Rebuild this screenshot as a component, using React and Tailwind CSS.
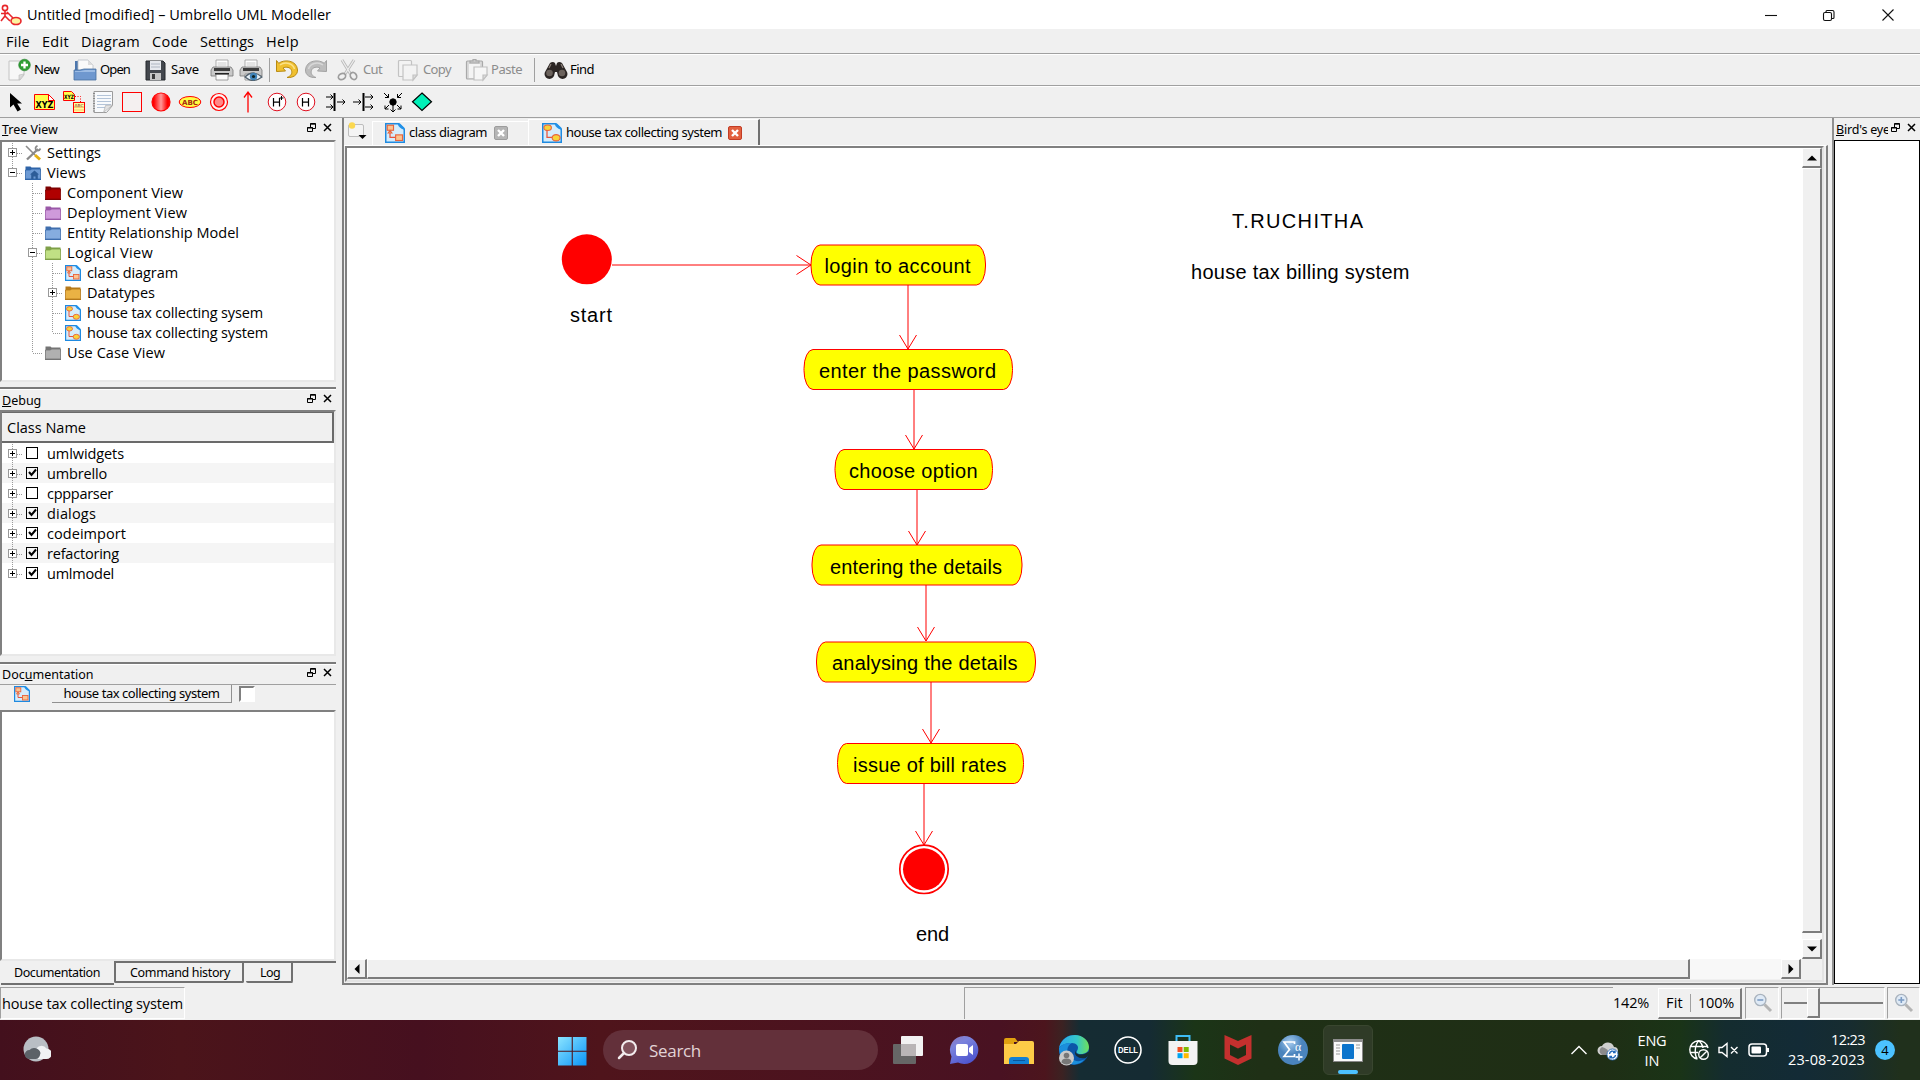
import React, { useLayoutEffect, useRef, useState } from "react";

const SEGOE = "font-['Open_Sans','Noto_Sans',sans-serif]";
const TAHOMA = "font-['Noto_Sans','Open_Sans',sans-serif]";

/* A single line of text whose tracking is adjusted so that it fills `w` pixels. */
function Fit({ w, children, className = "" }) {
  const ref = useRef(null);
  const [spacing, setSpacing] = useState(0);
  const text = String(children);
  useLayoutEffect(() => {
    const natural = ref.current.getBoundingClientRect().width - spacing * text.length;
    setSpacing((w - natural) / text.length);
  }, [w, text]);
  return (
    <span className={`block shrink-0 whitespace-pre ${className}`} style={{ width: w }}>
      <span ref={ref} style={{ letterSpacing: spacing }}>{children}</span>
    </span>
  );
}

/* ---------- small drawings ---------- */

const Logo = () => (
  <svg width="22" height="22" viewBox="0 0 22 22" fill="none" stroke="#e8262a" strokeWidth="1.6">
    <circle cx="5" cy="4" r="2.6" />
    <path d="M5 7v5M1 9.500h7M5 12l-4 5M5 12l5 5M7 8l6 6" />
    <ellipse cx="16" cy="17" rx="5" ry="3.500" fill="#fdf3a0" />
  </svg>
);

const NewDoc = () => (
  <svg width="24" height="24" viewBox="0 0 24 24">
    <path d="M2 3h15v14l-4 5H2z" fill="#f7f7f7" stroke="#c4c4c4" />
    <path d="M17 16l-5 6v-5z" fill="#dcdcdc" stroke="#bbb" strokeWidth=".6" />
    <circle cx="17.500" cy="7" r="5.800" fill="#2f9e35" stroke="#1b7a22" strokeWidth=".6" />
    <path d="M17.500 3.500v7M14 7h7" stroke="#fff" strokeWidth="2.300" />
  </svg>
);
const OpenDoc = () => (
  <svg width="24" height="24" viewBox="0 0 24 24">
    <path d="M2 3h5l2 3v8H2z" fill="#4d77ad" />
    <path d="M5 2h10l5 5v10H5z" fill="#fafafa" stroke="#b9bec5" strokeWidth=".8" />
    <path d="M15 2v5h5z" fill="#ddd" />
    <path d="M1 22V12h6l4-1h12v11z" fill="#6f98cf" stroke="#47709f" strokeWidth=".8" />
    <path d="M2 13h6l4-1h10v2H2z" fill="#9dbce4" />
  </svg>
);
const SaveIcon = () => (
  <svg width="22" height="24" viewBox="0 0 22 24">
    <path d="M1 3h17l2 2v17H1z" fill="#43474d" stroke="#25282c" />
    <path d="M5 3h11v9H5z" fill="#e6e9ee" />
    <path d="M6 6h9M6 9h9" stroke="#aeb6c2" />
    <path d="M5 15h11v7H5z" fill="#c6c6c6" />
    <path d="M7 16h3v5H7z" fill="#3a3a3a" />
  </svg>
);
const Printer = ({ eye }) => (
  <svg width="24" height="24" viewBox="0 0 24 24">
    <path d="M6 2h12v8H6z" fill="#fff" stroke="#999" strokeWidth=".8" />
    <path d="M7.500 5h9M7.500 7h9" stroke="#bbb" strokeWidth=".8" />
    <path d="M3 9h18l2 3v6H1v-6z" fill="#c9c9c9" stroke="#777" strokeWidth=".8" />
    <path d="M4 10h16v3H4z" fill="#3c3c3c" />
    <path d="M6 16h12v6H6z" fill="#fafafa" stroke="#888" strokeWidth=".8" />
    {!eye && <path d="M5 15h14v1.500H5z" fill="#222" />}
    {eye && (
      <g>
        <path d="M6 19q8-8 17 0q-9 7-17 0z" fill="#e8f1f8" stroke="#54636f" strokeWidth="1.200" />
        <circle cx="14.500" cy="18.500" r="3.700" fill="#3f83b8" />
        <circle cx="14.500" cy="18.500" r="1.600" fill="#122" />
      </g>
    )}
  </svg>
);
const Undo = ({ gray, flip }) => (
  <svg width="24" height="24" viewBox="0 0 24 24" className={flip ? "-scale-x-100" : ""}>
    <path
      d="M1.500 2.500l2.200 2.800C9 1 22 2 22.500 12c.2 5-4.500 8-10.500 7.500 4-1.500 5.500-4 4.500-7C15.500 9 11 8.500 8 10l2.500 3-9 .5z"
      fill={gray ? "#bdbdbd" : "#f0c030"}
      stroke={gray ? "#a3a3a3" : "#b88a10"}
      strokeWidth="1"
    />
    <path d="M5 7c5-3.500 13-2 14.500 4" fill="none" stroke={gray ? "#d8d8d8" : "#fbe28a"} strokeWidth="1.500" />
  </svg>
);
const Scissors = () => (
  <svg width="22" height="24" viewBox="0 0 22 24" fill="none">
    <path d="M5 2l8.500 14M17 2L8 16" stroke="#b9b9b9" strokeWidth="3" />
    <path d="M5 2l8.500 14M17 2L8 16" stroke="#ededed" strokeWidth="1.300" />
    <ellipse cx="5" cy="18.500" rx="3.800" ry="3" stroke="#9d9d9d" strokeWidth="1.700" transform="rotate(-30 5 18.500)" />
    <ellipse cx="16.500" cy="18" rx="3" ry="3.700" stroke="#9d9d9d" strokeWidth="1.700" transform="rotate(-30 16.500 18)" />
  </svg>
);
const CopyIcon = () => (
  <svg width="22" height="24" viewBox="0 0 22 24" fill="#f3f3f3" stroke="#c3c3c3" strokeWidth="1.200">
    <rect x="1.500" y="2.500" width="13" height="16" rx="1" />
    <path d="M6 7h14v10l-4 5H6z" />
    <path d="M20 17h-4v5z" fill="#ddd" />
  </svg>
);
const PasteIcon = () => (
  <svg width="24" height="24" viewBox="0 0 24 24" stroke="#a9a9a9" strokeWidth="1.200">
    <rect x="1.500" y="3" width="16" height="18" rx="1" fill="#dadada" />
    <rect x="4" y="6" width="11" height="14" fill="#f4f4f4" stroke="none" />
    <path d="M5 5V3h3V1.500h3V3h3v2z" fill="#c8c8c8" />
    <path d="M9 9h13v8l-4 5H9z" fill="#f6f6f6" stroke="#c0c0c0" />
    <path d="M22 17h-4v5z" fill="#ddd" stroke="#c0c0c0" />
  </svg>
);
const Binoculars = () => (
  <svg width="24" height="20" viewBox="0 0 24 20">
    <path d="M6 3q3-2 5 0l1 3 1-3q2-2 5 0l5 9a4.500 4.500 0 0 1-9 4l-1-4h-2l-1 4a4.500 4.500 0 0 1-9-4z" fill="#2b2523" />
    <circle cx="5.500" cy="13" r="3.300" fill="#6b625c" />
    <circle cx="18" cy="13" r="3.300" fill="#6b625c" />
    <path d="M7 4l-2 4M17 4l2 4" stroke="#8b8079" strokeWidth="1.200" />
  </svg>
);

const CursorIcon = () => (
  <svg width="24" height="24" viewBox="0 0 24 24">
    <path d="M6 3v14.500l3.500-3 4 7 3.500-2-3.800-6H18z" fill="#000" />
  </svg>
);
const XyzIcon = () => (
  <svg width="24" height="24" viewBox="0 0 24 24">
    <path d="M1.500 4.500h14l6 6v9h-20z" fill="#ffff4d" stroke="#f00" />
    <path d="M15.500 4.500l6 6h-6z" fill="#fff" stroke="#f00" />
    <text x="2.500" y="18" textLength="18" lengthAdjust="spacingAndGlyphs" fontSize="9.500" fontWeight="700" fontFamily="DejaVu Sans">XYZ</text>
  </svg>
);
const XyzNote = () => (
  <svg width="24" height="24" viewBox="0 0 24 24">
    <path d="M1.500 1.500h8l3 3v6h-11z" fill="#ffff4d" stroke="#f00" />
    <text x="2" y="9.300" textLength="10" lengthAdjust="spacingAndGlyphs" fontSize="6" fontWeight="700" fontFamily="DejaVu Sans">XYZ</text>
    <path d="M13 6.500h5.500V12" fill="none" stroke="#f00" strokeDasharray="1 1.500" />
    <rect x="11.500" y="12.500" width="11" height="10" fill="#ffffa0" stroke="#f00" />
    <path d="M12 17.500h10M12 20h10" stroke="#fa5" strokeWidth=".7" />
    <text x="12.500" y="16.600" textLength="9" lengthAdjust="spacingAndGlyphs" fontSize="4" fontFamily="DejaVu Sans" fill="#822">ABC</text>
  </svg>
);
const NoteIcon = () => (
  <svg width="24" height="24" viewBox="0 0 24 24">
    <path d="M3 1.500h18.500v14l-6 7H3z" fill="#f8fafc" stroke="#9c9c9c" />
    <path d="M6 5.500h14M6 8.500h14M6 11.500h14M6 14.500h14M6 17.500h9" stroke="#b4c4d8" />
    <path d="M3 3v19" stroke="#888" strokeDasharray="1 1.500" strokeWidth="2" />
    <path d="M21.500 15l-9 7.500 2-7z" fill="#e2e2e2" stroke="#aaa" strokeWidth=".6" />
  </svg>
);
const RectIcon = () => (
  <svg width="24" height="24" viewBox="0 0 24 24"><rect x="2.500" y="2.500" width="19" height="19" fill="#f4f0f0" stroke="#f00" /></svg>
);
const BallIcon = () => (
  <svg width="24" height="24" viewBox="0 0 24 24">
    <defs>
      <linearGradient id="ball"><stop offset=".1" stopColor="#f00" /><stop offset=".5" stopColor="#f99" /><stop offset=".85" stopColor="#f00" /></linearGradient>
    </defs>
    <circle cx="12" cy="12" r="9" fill="url(#ball)" stroke="#f00" strokeWidth="1.200" />
  </svg>
);
const AbcIcon = () => (
  <svg width="24" height="24" viewBox="0 0 24 24">
    <ellipse cx="12" cy="12" rx="10.800" ry="5.500" fill="#ff4" stroke="#f00" />
    <text x="4" y="14.800" textLength="16" lengthAdjust="spacingAndGlyphs" fontSize="7" fontWeight="700" fill="#a52a10" fontFamily="DejaVu Sans">ABC</text>
  </svg>
);
const TargetIcon = () => (
  <svg width="24" height="24" viewBox="0 0 24 24" stroke="#f00">
    <circle cx="12" cy="12" r="8.500" fill="#fdf4f4" strokeWidth="1.200" />
    <circle cx="12" cy="12" r="5" fill="#f88" strokeWidth="1.500" />
  </svg>
);
const UpArrow = () => (
  <svg width="24" height="24" viewBox="0 0 24 24" stroke="#f00" strokeWidth="1.300" fill="none"><path d="M12 22.500V2M8 7.500L12 2l4 5.500" /></svg>
);
const HIcon = ({ star }) => (
  <svg width="24" height="24" viewBox="0 0 24 24">
    <circle cx="12" cy="12" r="8.800" fill="#fff" stroke="#e01020" />
    <path d="M8.500 8v8.500M14.500 8v8.500M8.500 12.200h6" stroke="#000" strokeWidth="1.200" />
    {star && <path d="M16.500 6v4M14.500 8h4" stroke="#000" />}
  </svg>
);
const ForkIcon = ({ flip }) => (
  <svg width="24" height="24" viewBox="0 0 24 24" stroke="#000" fill="none">
    {flip ? (
      <path d="M1 12h8M6.500 9.500L9 12l-2.500 2.500M13 7h8M18.500 4.500L21 7l-2.500 2.500M13 17h8M18.500 14.500L21 17l-2.500 2.500" />
    ) : (
      <path d="M3 7h7M7.500 4.500L10 7 7.500 9.500M3 17h7M7.500 14.500L10 17l-2.500 2.500M14 12h8M19.500 9.500L22 12l-2.500 2.500" />
    )}
    <path d="M11.500 3v18" strokeWidth="2" />
  </svg>
);
const MergeIcon = () => (
  <svg width="24" height="24" viewBox="0 0 24 24" stroke="#000" fill="none">
    <path d="M3 3l4.500 4.500M7.500 4v3.500H4M21 3l-4.500 4.500M16.500 4v3.500H20M12 15v7M9.500 19.500L12 22l2.500-2.500M8 15l-4 4M4 15.500V19h3.500M16 15l4 4M20 15.500V19h-3.500" />
    <circle cx="12" cy="12" r="3.200" fill="#000" />
  </svg>
);
const DiamondIcon = () => (
  <svg width="24" height="24" viewBox="0 0 24 24"><path d="M12 3l9.500 8.700L12 20.500 2.500 11.700z" fill="#00f0b8" stroke="#000" strokeWidth="1.200" /></svg>
);

const DiagramIcon = ({ size = 16, activity }) => (
  <svg width={size} height={size} viewBox="0 0 16 16">
    <path d="M.6.6h10.400L15.400 5v10.400H.6z" fill="#d5ecfb" stroke="#1f8ae0" strokeWidth="1.200" />
    <path d="M10 .3q1 4 5.700 5V4L12 .3z" fill="#2191e8" />
    <path d="M4 5v6.500h6" fill="none" stroke="#e8543c" />
    {activity ? (
      <g fill="#f7d33a" stroke="#e8643c" strokeWidth=".9">
        <ellipse cx="4.500" cy="3.800" rx="3" ry="2.200" />
        <ellipse cx="11.300" cy="11.800" rx="3.200" ry="2.500" />
      </g>
    ) : (
      <g fill="#fbc490" stroke="#e8643c" strokeWidth=".9">
        <rect x="1.800" y="1.800" width="5" height="4" />
        <rect x="8.500" y="9.500" width="5.500" height="4.500" />
        <path d="M4 6l-1.500 2H5.500z" />
      </g>
    )}
  </svg>
);
const Folder = ({ dark, light, home }) => (
  <svg width="16" height="16" viewBox="0 0 16 16">
    <path d="M.5 1.500h5l1 1h9v4H.5z" fill={dark} />
    <path d="M.5 5h5l1-1h9v10H.5z" fill={light} stroke={dark} strokeWidth=".8" />
    <path d="M0 14.500h16" stroke={dark} />
    {home && <path d="M5 9.500L9.500 5.500 14 9.500h-1.200V14H10.500v-2.500h-2V14H6.200V9.500z" fill="#2c5c98" />}
  </svg>
);
const Tools = () => (
  <svg width="17" height="16" viewBox="0 0 17 16" fill="none">
    <path d="M1 1l9 9" stroke="#8b8b8b" strokeWidth="1.600" />
    <path d="M10 10l5 4.500" stroke="#e3b012" strokeWidth="3" />
    <path d="M13 4L2 14.500" stroke="#8a8a8a" strokeWidth="2.400" />
    <path d="M12.500.8q-3 1.500-1.500 4.200 3 1.500 4.500-1.500" stroke="#8a8a8a" strokeWidth="1.700" />
  </svg>
);

/* ---------- window chrome ---------- */

function TitleBar() {
  return (
    <div className={`flex h-[29px] items-center bg-white ${SEGOE} text-[14.5px] text-black`}>
      <div className="flex w-[27px]"><Logo /></div>
      <Fit w={304}>Untitled [modified] – Umbrello UML Modeller</Fit>
      <div className="ml-auto flex items-center">
        <svg width="156" height="28" viewBox="0 0 156 28" fill="none" stroke="#111" strokeWidth="1.100">
          <path d="M1 14.500h12" />
          <rect x="59.500" y="11.500" width="8" height="8" rx="1.500" />
          <path d="M62 11.500V10.500a1 1 0 0 1 1-1h5.500a1.500 1.500 0 0 1 1.500 1.500v5.500a1 1 0 0 1-1 1h-1.500" />
          <path d="M118.500 8.500l11 11M129.500 8.500l-11 11" />
        </svg>
      </div>
    </div>
  );
}

const MENUS = [["File", 24], ["Edit", 27], ["Diagram", 59], ["Code", 36], ["Settings", 54], ["Help", 33]];
function MenuBar() {
  return (
    <div className={`flex h-[24px] items-center gap-3 pt-[2px] pl-1.5 ${SEGOE} text-[14.5px] text-black`}>
      {MENUS.map(([t, w]) => <Fit key={t} w={w}>{t}</Fit>)}
    </div>
  );
}

const Sep = ({ className = "" }) => <div className={`h-[24px] w-px shrink-0 bg-[#a0a0a0] ${className}`} />;

function Toolbar() {
  return (
    <div className={`flex h-[32px] items-center border-t border-[#a0a0a0] pt-px pl-[7px] shadow-[inset_0_1px_0_#fff] ${TAHOMA} text-[13px] text-black`}>
      <div className="w-[27px]"><NewDoc /></div><Fit w={25}>New</Fit>
      <div className="ml-[14px] w-[27px]"><OpenDoc /></div><Fit w={30}>Open</Fit>
      <div className="ml-[15px] w-[26px]"><SaveIcon /></div><Fit w={28}>Save</Fit>
      <div className="ml-[11px] w-[29px]"><Printer /></div>
      <div className="w-[30px]"><Printer eye /></div>
      <Sep />
      <div className="ml-[5px] w-[29px]"><Undo /></div>
      <div className="w-[33px]"><Undo gray flip /></div>
      <div className="w-[26px]"><Scissors /></div><Fit w={19} className="text-[#8c8c8c]">Cut</Fit>
      <div className="ml-[15px] w-[26px]"><CopyIcon /></div><Fit w={28} className="text-[#8c8c8c]">Copy</Fit>
      <div className="ml-[14px] w-[26px]"><PasteIcon /></div><Fit w={31} className="text-[#8c8c8c]">Paste</Fit>
      <Sep className="ml-[12px]" />
      <div className="ml-[9px] w-[26px]"><Binoculars /></div><Fit w={24}>Find</Fit>
    </div>
  );
}

const TOOLS = [
  CursorIcon, XyzIcon, XyzNote, NoteIcon, RectIcon, BallIcon, AbcIcon, TargetIcon, UpArrow,
  () => <HIcon star />, HIcon, ForkIcon, () => <ForkIcon flip />, MergeIcon, DiamondIcon,
];
function DrawBar() {
  return (
    <div className="flex h-[32px] items-center gap-[5px] border-t border-[#a0a0a0] pl-[4px] pt-px shadow-[inset_0_1px_0_#fff]">
      {TOOLS.map((Icon, i) => <Icon key={i} />)}
    </div>
  );
}

/* ---------- dock panels ---------- */

const DockButtons = ({ className }) => (
  <svg className={`mb-[4px] shrink-0 ${className}`} width="26" height="11" viewBox="0 0 26 11" fill="none" stroke="#000">
    <path d="M3.500 4V.5h5v5H6M3 1.200h6" />
    <path d="M.5 4.500h5v4h-5zM0 5h6" />
    <path d="M17 1l7 7M24 1l-7 7" strokeWidth="1.500" />
  </svg>
);

function DockTitle({ children, className = "h-[21px]" }) {
  return (
    <div className={`flex shrink-0 items-center pt-[2px] ${TAHOMA} text-[12.5px] text-black ${className}`}>
      <span className="pl-[2px]">{children}</span>
      <DockButtons className="mr-[3px] ml-auto" />
    </div>
  );
}

const frame =
  "border-2 border-t-[#808080] border-l-[#808080] border-b-[#e8e8e8] border-r-[#e8e8e8] bg-white";

/* Branch lines and the expander box left of a tree row. */
function Branch({ level, box, up = true, down = true, rails = [] }) {
  const x = 10.5 + level * 20;
  const w = 23 + level * 20;
  return (
    <svg width={w} height="20" viewBox={`0 0 ${w} 20`} className="shrink-0" fill="none" stroke="#999" shapeRendering="crispEdges">
      <g strokeDasharray="1 1">
        {rails.map((r) => <path key={r} d={`M${10.5 + r * 20} 0v20`} />)}
        {up && <path d={`M${x} 0v10`} />}
        {down && <path d={`M${x} 10v10`} />}
        <path d={`M${x} 10.500h10`} />
      </g>
      {box && (
        <g>
          <rect x={x - 4} y="5.500" width="8" height="8" fill="#fff" />
          <path d={`M${x - 2.5} 9.500h5`} stroke="#000" />
          {box === "+" && <path d={`M${x} 7v5`} stroke="#000" />}
        </g>
      )}
    </svg>
  );
}

const TREE = [
  { t: "Settings", w: 54, icon: <Tools />, level: 0, box: "+" },
  { t: "Views", w: 39, icon: <Folder dark="#2f64a8" light="#6d9ad4" home />, level: 0, box: "-", down: false },
  { t: "Component View", w: 116, icon: <Folder dark="#7d0000" light="#b00000" />, level: 1 },
  { t: "Deployment View", w: 120, icon: <Folder dark="#9a58a8" light="#cf9adb" />, level: 1 },
  { t: "Entity Relationship Model", w: 172, icon: <Folder dark="#3f6ead" light="#86addf" />, level: 1 },
  { t: "Logical View", w: 86, icon: <Folder dark="#7fa048" light="#c0e084" />, level: 1, box: "-" },
  { t: "class diagram", w: 91, icon: <DiagramIcon />, level: 2, rails: [1] },
  { t: "Datatypes", w: 68, icon: <Folder dark="#b5791a" light="#eab244" />, level: 2, box: "+", rails: [1] },
  { t: "house tax collecting sysem", w: 176, icon: <DiagramIcon activity />, level: 2, rails: [1] },
  { t: "house tax collecting system", w: 181, icon: <DiagramIcon activity />, level: 2, rails: [1], down: false },
  { t: "Use Case View", w: 98, icon: <Folder dark="#747474" light="#b0b0b0" />, level: 1, down: false },
];

const DEBUG = [
  ["umlwidgets", 77, false], ["umbrello", 60, true], ["cppparser", 66, false], ["dialogs", 49, true],
  ["codeimport", 79, true], ["refactoring", 72, true], ["umlmodel", 67, true],
];

function LeftDocks() {
  return (
    <div className="flex w-[336px] shrink-0 flex-col">
      <DockTitle className="mt-px h-[21px]"><u>T</u>ree View</DockTitle>
      <div className={`h-[242px] w-[336px] ${frame} pt-[1px] ${SEGOE} text-[14.5px] text-black`}>
        {TREE.map((r) => (
          <div key={r.t + r.w} className="flex h-5 items-center">
            <Branch level={r.level} box={r.box} down={r.down} rails={r.rails} />
            <div className="w-[22px] shrink-0">{r.icon}</div>
            <Fit w={r.w}>{r.t}</Fit>
          </div>
        ))}
      </div>

      <div className="mt-[5px] h-[2px] bg-[#7a7a7a]" />
      <DockTitle className="h-[21px] border-t border-white"><u>D</u>ebug</DockTitle>
      <div className={`h-[246px] w-[336px] ${frame} ${SEGOE} text-[14.5px] text-black`}>
        <div className="flex h-[31px] items-center border-t border-r-2 border-b-2 border-[#6a6a6a] bg-[#f0f0f0] pt-[2px] pl-[5px]">
          <Fit w={79}>Class Name</Fit>
        </div>
        {DEBUG.map(([t, w, on], i) => (
          <div key={t} className="flex h-5 items-center pt-px odd:bg-[#f5f5f5]">
            <Branch level={0} box="+" down={i < DEBUG.length - 1} />
            <svg width="22" height="20" viewBox="0 0 22 20" className="shrink-0" fill="none">
              <rect x="1.500" y="3.500" width="11" height="11" stroke="#000" />
              {on && <path d="M4 8l2.500 3L11 5.500" stroke="#000" strokeWidth="2" />}
            </svg>
            <Fit w={w}>{t}</Fit>
          </div>
        ))}
      </div>

      <div className="mt-[6px] h-[2px] bg-[#7a7a7a]" />
      <DockTitle className="h-[20px] border-t border-white">Doc<u>u</u>mentation</DockTitle>
      <div className={`flex h-[26px] items-start border-t border-[#a0a0a0] ${TAHOMA} text-[13px] text-black`}>
        <div className="ml-[14px] mt-[1px] w-[38px]"><DiagramIcon /></div>
        <div className="flex h-[18px] w-[180px] items-center justify-center border-r border-b border-[#909090]">
          <Fit w={156}>house tax collecting system</Fit>
        </div>
        <div className="ml-[7px] mt-[1px] h-[16px] w-[16px] border-2 border-t-[#808080] border-l-[#808080] border-b-[#fff] border-r-[#fff] bg-white" />
      </div>
      <div className={`h-[251px] w-[336px] ${frame}`} />
      <div className={`flex h-[24px] items-start ${TAHOMA} text-[12.5px] text-black`}>
        <div className="ml-[1px] flex h-[24px] w-[113px] items-center border-b-2 border-[#707070] pl-[13px] pt-[2px]">
          <Fit w={86}>Documentation</Fit>
        </div>
        <div className="flex flex-1 items-start border-t-2 border-[#707070]">
          <div className="flex h-[20px] w-[130px] items-center rounded-b-xs border-r-2 border-b-2 border-l-2 border-[#707070] pt-[2px] pl-[14px]">
            <Fit w={100}>Command history</Fit>
          </div>
          <div className="ml-[2px] flex h-[20px] w-[47px] items-center rounded-b-xs border-r-2 border-b-2 border-[#707070] pt-[2px] pl-[14px]">
            <Fit w={20}>Log</Fit>
          </div>
        </div>
      </div>
    </div>
  );
}

/* ---------- diagram ---------- */

const NODES = [
  { x: 811, y: 245, w: 174.5, t: "login to account", tx: 824.5, ty: 272.500, tw: 146 },
  { x: 804, y: 349.5, w: 208.5, t: "enter the password", tx: 819, ty: 378, tw: 177 },
  { x: 835, y: 449.5, w: 157.500, t: "choose option", tx: 849, ty: 478, tw: 128.500 },
  { x: 812, y: 545, w: 210, t: "entering the details", tx: 830, ty: 573.500, tw: 172 },
  { x: 816.5, y: 642, w: 219, t: "analysing the details", tx: 832, ty: 669.800, tw: 185.500 },
  { x: 837.5, y: 743.5, w: 186, t: "issue of bill rates", tx: 853, ty: 772, tw: 153.500 },
];
const LINKS = [[908, 285, 349], [914, 390, 449], [917, 490, 545], [926, 585, 641], [931, 682, 743], [924, 784, 845]];
const LABELS = [
  ["start", 570, 322, 42], ["end", 916, 940.5, 33],
  ["T.RUCHITHA", 1232, 227.5, 131], ["house tax billing system", 1191, 279, 218.500],
];

function Canvas() {
  return (
    <svg width="1455" height="811" viewBox="347 148 1455 811" className="block bg-white" fontFamily="Liberation Sans, Arial, sans-serif" fontSize="20">
      <circle cx="586.800" cy="259.300" r="25" fill="#f00" />
      <g stroke="#f00" fill="none">
        <path d="M612 265H811M796.500 255.500L811 265l-14.500 9.500" />
        {LINKS.map(([x, a, b]) => (
          <path key={b} d={`M${x} ${a}V${b}M${x - 8.5} ${b - 14}L${x} ${b}l8.500-14`} />
        ))}
      </g>
      {NODES.map((n) => (
        <g key={n.t}>
          <rect x={n.x} y={n.y} width={n.w} height="40" rx="9" ry="19" fill="#ff0" stroke="#f00" />
          <text x={n.tx} y={n.ty} textLength={n.tw}>{n.t}</text>
        </g>
      ))}
      <circle cx="924" cy="869.300" r="24.200" fill="#fff" stroke="#f00" strokeWidth="1.700" />
      <circle cx="924" cy="869.300" r="21" fill="#f00" />
      {LABELS.map(([t, x, y, w]) => <text key={t} x={x} y={y} textLength={w}>{t}</text>)}
    </svg>
  );
}

const raised = "border-t border-l border-t-white border-l-white border-r-2 border-b-2 border-r-[#7c7c7c] border-b-[#7c7c7c] bg-[#f0f0f0]";
const track = "bg-[#f8f8f8]";

const ScrollArrow = ({ d }) => (
  <div className={`flex h-[20px] w-[20px] shrink-0 items-center justify-center ${raised}`}>
    <svg width="10" height="10" viewBox="0 0 10 10"><path d={d} fill="#000" /></svg>
  </div>
);

const TabClose = ({ on }) => (
  <svg width="14" height="14" viewBox="0 0 14 14" className="shrink-0">
    <rect x=".5" y=".5" width="13" height="13" rx="1.500" fill={on ? "#e2603f" : "#b5b5b5"} stroke={on ? "#c23c24" : "#9d9d9d"} />
    <path d="M4 4l6 6M10 4l-6 6" stroke="#fff" strokeWidth="2.400" />
  </svg>
);

function Center() {
  return (
    <div className="ml-[6px] flex h-[867px] w-[1486px] shrink-0 flex-col border-l-2 border-[#808080]">
      <div className={`flex h-[27px] shrink-0 items-end ${TAHOMA} text-[13px] text-black`}>
        <svg className="mb-[4px] ml-[4px]" width="20" height="20" viewBox="0 0 20 20">
          <rect x=".5" y="3.500" width="15" height="12" rx="1.500" fill="#f4f4f4" stroke="#bdbdbd" />
          <circle cx="4" cy="4.500" r="3.200" fill="#fbd850" />
          <path d="M10.500 14h8l-4 4z" fill="#000" />
        </svg>
        <div className="ml-[4px] flex h-[24px] w-[156px] items-center border-t border-l border-white pb-[1px] pl-[12px]">
          <DiagramIcon size={20} />
          <Fit w={78} className="ml-[4px]">class diagram</Fit>
          <div className="ml-[7px]"><TabClose /></div>
        </div>
        <div className="flex h-[26px] w-[232px] items-center border-t border-r-2 border-l border-t-white border-l-white border-r-[#707070] pl-[13px]">
          <DiagramIcon size={20} activity />
          <Fit w={156} className="ml-[4px]">house tax collecting system</Fit>
          <div className="ml-[6px]"><TabClose on /></div>
        </div>
      </div>
      <div className="flex-1 border-t border-r-2 border-b-2 border-t-white border-r-[#808080] border-b-[#808080] pl-px">
        <div className="h-[836px] w-[1479px] border-2 border-t-[#808080] border-l-[#808080] border-r-[#e3e3e3] border-b-[#e3e3e3] bg-[#f0f0f0]">
          <div className="flex">
            <Canvas />
            <div className={`flex h-[811px] w-[20px] flex-col ${track}`}>
              <ScrollArrow d="M5 2.500l5 5H0z" />
              <div className={`h-[765px] w-[20px] ${raised}`} />
              <div className="h-[6px]" />
              <ScrollArrow d="M5 7.500l-5-5h10z" />
            </div>
          </div>
          <div className={`flex h-[20px] w-[1454px] ${track}`}>
            <ScrollArrow d="M2.500 5l5-5v10z" />
            <div className={`h-[20px] w-[1323px] ${raised}`} />
            <div className="flex-1" />
            <ScrollArrow d="M7.500 5l-5 5V0z" />
          </div>
        </div>
      </div>
    </div>
  );
}

function BirdsEye() {
  return (
    <div className="ml-[4px] flex h-[867px] flex-1 flex-col border-l-2 border-[#909090]">
      <div className={`flex h-[22px] items-center pt-[2px] ${TAHOMA} text-[12.5px] text-black`}>
        <span className="w-[54px] overflow-hidden pl-[2px] tracking-[-0.2px] whitespace-nowrap"><u>B</u>ird's eye</span>
        <DockButtons className="ml-[3px]" />
      </div>
      <div className="h-[844px] border border-black bg-white" />
    </div>
  );
}

/* ---------- status bar ---------- */

const Magnifier = ({ plus }) => (
  <svg width="20" height="20" viewBox="0 0 20 20" fill="none">
    <path d="M11.500 11.500l6.500 6.500" stroke="#b4b4b4" strokeWidth="3" />
    <circle cx="7.300" cy="7" r="5.600" fill="#dfeaf6" stroke="#a9b3be" strokeWidth="1.400" />
    <path d="M4.300 7h6" stroke="#7c9cc4" strokeWidth="1.600" />
    {plus && <path d="M7.300 4v6" stroke="#7c9cc4" strokeWidth="1.600" />}
  </svg>
);
const sunken = "border-t border-l border-[#a0a0a0] border-r border-b border-r-white border-b-white";

function StatusBar() {
  return (
    <div className={`flex h-[35px] items-center pt-px ${SEGOE} text-[14.5px] text-black`}>
      <div className={`flex h-[32px] w-[185px] items-center pt-px pl-px ${sunken}`}>
        <Fit w={181}>house tax collecting system</Fit>
      </div>
      <div className="ml-[779px] h-[32px] w-[649px] shrink-0 border-t border-l border-[#a0a0a0]" />
      <Fit w={36}>142%</Fit>
      <div className={`ml-[9px] flex h-[31px] w-[84px] items-center pt-px pl-[7px] ${raised}`}>
        <Fit w={17}>Fit</Fit>
        <div className="mx-[7px] h-[18px] w-px bg-[#a0a0a0]" />
        <Fit w={36}>100%</Fit>
      </div>
      <div className={`ml-[3px] flex h-[32px] w-[34px] items-center justify-center pl-px ${sunken}`}><Magnifier /></div>
      <div className={`ml-[2px] flex h-[32px] w-[104px] items-center pl-[2px] ${sunken}`}>
        <div className="h-[2px] w-[23px] bg-[#808080]" />
        <div className={`h-[30px] w-[13px] ${raised}`} />
        <div className="h-[2px] w-[63px] bg-[#808080]" />
      </div>
      <div className={`ml-[2px] flex h-[32px] flex-1 items-center justify-center pl-px ${sunken}`}><Magnifier plus /></div>
    </div>
  );
}

/* ---------- taskbar ---------- */

function Taskbar() {
  return (
    <div className={`flex h-[60px] items-center bg-[linear-gradient(90deg,#43101d_0px,#4b141a_180px,#46101f_420px,#4f141b_600px,#491222_1000px,#4c151d_1045px,#3c2222_1062px,#152c33_1080px,#152b33_1150px,#1b3517_1195px,#1f3016_1260px,#1f2e15_1600px,#1a3417_1680px,#142c2f_1725px,#132b36_1800px,#172c30_1850px,#20301c_1900px)] ${SEGOE} text-white`}>
      <svg width="30" height="30" viewBox="0 0 30 30" className="ml-[21px] shrink-0">
        <circle cx="15" cy="14" r="12.500" fill="#b9bec4" />
        <path d="M14 24a5 5 0 0 1 1-9.500 6 6 0 0 1 10.500-1 5 5 0 0 1 0 10.500z" fill="#f0f2f4" />
        <path d="M8 24a4.500 4.500 0 0 1 .5-9 6.500 6.500 0 0 1 11 3q-1 6-5 6z" fill="#5c6268" />
      </svg>
      <svg width="30" height="30" viewBox="0 0 30 30" className="mt-px ml-[506px] shrink-0">
        <defs><linearGradient id="win" x1="0" y1="0" x2="1" y2="1"><stop stopColor="#8be4ff" /><stop offset="1" stopColor="#0a94f8" /></linearGradient></defs>
        <path d="M1 1h13.700v13.700H1zM15.800 1h13.700v13.700H15.800zM1 15.800h13.700v13.700H1zM15.800 15.800h13.700v13.700H15.800z" fill="url(#win)" />
      </svg>
      <div className="ml-[16px] flex h-[40px] w-[275px] shrink-0 items-center rounded-full bg-[#63303a] pl-[14px]">
        <svg width="22" height="22" viewBox="0 0 22 22" fill="none" stroke="#f3ecee" strokeWidth="2" strokeLinecap="round">
          <circle cx="12" cy="9" r="7" fill="#81525c" /><path d="M7 14l-5 5" strokeWidth="2.500" />
        </svg>
        <Fit w={52} className="mt-[2px] ml-[10px] text-[17px] text-[#e2d3d6]">Search</Fit>
      </div>
      <svg width="32" height="30" viewBox="0 0 32 30" className="ml-[14px] shrink-0">
        <rect x="1" y="9" width="23" height="20" rx="1" fill="#666" />
        <rect x="9" y="1" width="22" height="20" rx="1" fill="#f2f2f2" />
        <path d="M9 9h15v12H9z" fill="#b9b5b6" />
      </svg>
      <svg width="30" height="30" viewBox="0 0 30 30" className="ml-[25px] shrink-0">
        <defs><linearGradient id="chat" x1="0" y1="0" x2=".6" y2="1"><stop stopColor="#8d76b8" /><stop offset=".35" stopColor="#7b83dd" /><stop offset="1" stopColor="#4e55cf" /></linearGradient></defs>
        <path d="M15 1a14 14 0 1 1-6 26.500L1 29l1.500-7.500A14 14 0 0 1 15 1z" fill="url(#chat)" />
        <rect x="7" y="9" width="12" height="12" rx="2" fill="#fff" /><path d="M20 13l4-3v10l-4-3z" fill="#fff" />
      </svg>
      <svg width="30" height="30" viewBox="0 0 30 30" className="mt-px ml-[25px] shrink-0">
        <path d="M0 4q0-2 2-2h9l3 4h-4v6H0z" fill="#e0a10f" />
        <path d="M0 8h12l3-3h13q2 0 2 2v21H0z" fill="#fdcb47" />
        <path d="M5 28v-4q0-3 3-3h14q3 0 3 3v4z" fill="#1280d4" /><path d="M9 24.500h12" stroke="#0a569c" />
      </svg>
      <svg width="32" height="32" viewBox="0 0 32 32" className="ml-[24px] shrink-0">
        <defs>
          <linearGradient id="edgeA" x1="0" x2="1"><stop stopColor="#2aa6ee" /><stop offset=".6" stopColor="#35c7c9" /><stop offset="1" stopColor="#6fe05a" /></linearGradient>
        </defs>
        <circle cx="16" cy="16" r="15" fill="#0c56a8" />
        <path d="M1 14C3 5 10 1 17 1c8 0 14 6 14 12 0 5-4 7-8 7s-5-2-4-3c3-5-1-8-5-8C8 9 3 11 1 14z" fill="url(#edgeA)" />
        <path d="M1 14c3-4 8-5.500 13-5-5 2-7 10-1 15 4 4 9 4 14 1-5 7-16 7-22 1C2 22 1 18 1 14z" fill="#1b8fdc" />
        <path d="M18.500 15.500q-2 3 1 4.500 6 2 12-3v4l-4 3q-6 1-9-2t0-6.500z" fill="#152c33" />
        <circle cx="8.500" cy="24" r="7.500" fill="#c9c9c9" />
        <circle cx="8.500" cy="21.500" r="2.800" fill="#777" /><path d="M3.500 28.500q0-4 5-4t5 4q-5 4-10 0z" fill="#777" />
      </svg>
      <svg width="30" height="30" viewBox="0 0 30 30" className="ml-[23px] shrink-0">
        <circle cx="15" cy="15" r="13" fill="none" stroke="#fff" strokeWidth="1.600" />
        <text x="5" y="18.300" textLength="20" lengthAdjust="spacingAndGlyphs" fontSize="9.500" fontWeight="700" fill="#fff" fontFamily="Liberation Sans">DELL</text>
      </svg>
      <svg width="30" height="32" viewBox="0 0 30 32" className="ml-[25px] shrink-0">
        <path d="M8.500 7V2h13v5" fill="none" stroke="#3ebcf5" strokeWidth="2" />
        <path d="M.5 7h29v20q0 4-4 4h-21q-4 0-4-4z" fill="#f3f3f3" />
        <path d="M9.500 13h5v5h-5z" fill="#f25022" /><path d="M15.700 13h5v5h-5z" fill="#7fba00" />
        <path d="M9.500 19.200h5v5h-5z" fill="#00a4ef" /><path d="M15.700 19.200h5v5h-5z" fill="#ffb900" />
      </svg>
      <svg width="28" height="30" viewBox="0 0 28 30" className="ml-[26px] shrink-0">
        <path d="M.5 0L14 6 27.500 0v23.500L14 30 .5 23.500z" fill="#c4302e" /><path d="M6 9.500l8 4 8-4v10.500l-8 4-8-4z" fill="#1f2e16" />
      </svg>
      <svg width="32" height="32" viewBox="0 0 32 32" className="ml-[25px] shrink-0">
        <defs><radialGradient id="sig" cx=".4" cy=".25"><stop stopColor="#a5cbee" /><stop offset=".8" stopColor="#4a84bd" /></radialGradient></defs>
        <circle cx="16" cy="16" r="15" fill="url(#sig)" />
        <path d="M17.500 10V8H7l5.500 7.500L7 22.500h10.500v-2.500" fill="none" stroke="#fff" strokeWidth="1.700" />
        <text x="18" y="17" fontSize="12" fill="#fff" fontFamily="Liberation Serif">α</text>
        <path d="M22 19.500v7M18.500 23h7" stroke="#dce9f5" strokeWidth="1.800" />
      </svg>
      <div className="ml-[14px] flex h-[50px] w-[50px] shrink-0 flex-col items-center rounded-md border border-[#39462f] bg-[#2f3b27] pt-[13px]">
        <svg width="30" height="23" viewBox="0 0 30 23" className="shrink-0">
          <rect x=".5" y=".5" width="29" height="22" fill="#fafafa" stroke="#888" />
          <path d="M0 0h30v3H0z" fill="#8d8d8d" />
          <rect x="9" y="5" width="12" height="15" rx="1" fill="#0c74cc" />
          <path d="M3 6h4M3 9h4M3 12h4M3 15h4M23 6h4M23 9h4" stroke="#999" />
        </svg>
        <div className="mt-[8px] h-[4px] w-[20px] shrink-0 rounded-full bg-[#4cc2ff]" />
      </div>
      <svg width="18" height="12" viewBox="0 0 18 12" className="ml-[197px] shrink-0"><path d="M1.500 10L9 2.500l7.500 7.500" fill="none" stroke="#fff" strokeWidth="1.400" /></svg>
      <svg width="22" height="20" viewBox="0 0 22 20" className="mt-[2px] ml-[9px] shrink-0">
        <path d="M5 14a4.500 4.500 0 0 1 0-9 6.500 6.500 0 0 1 12 1 4 4 0 0 1 0 8z" fill="#cfcfcf" /><path d="M5 14a4.500 4.500 0 0 1 0-8q6 1 8 8z" fill="#8a8a8a" />
        <circle cx="15.500" cy="13.500" r="5.500" fill="#fff" stroke="#1e66b8" strokeWidth=".8" />
        <path d="M12.500 13a3 3 0 0 1 5.500-1.500M18.500 14a3 3 0 0 1-5.500 1.500M18 9.500v2h-2M13 17.500v-2h2" fill="none" stroke="#1e66b8" strokeWidth="1.400" />
      </svg>
      <div className="mt-px ml-[17px] flex w-[32px] shrink-0 flex-col items-center text-[14.5px] leading-[20px]">
        <Fit w={29}>ENG</Fit>
        <Fit w={15}>IN</Fit>
      </div>
      <svg width="22" height="22" viewBox="0 0 22 22" fill="none" stroke="#fff" strokeWidth="1.400" className="ml-[20px] shrink-0">
        <path d="M20 9a9.200 9.200 0 1 0-10.500 11M11 1.800C7 5 6 15 9 19.500M11 1.800Q14.500 5 15 9M2.500 7.500h17M2 13.500h8" />
        <circle cx="15.500" cy="15.500" r="4.800" /><path d="M12.200 18.800l6.600-6.600" />
      </svg>
      <svg width="22" height="18" viewBox="0 0 22 18" fill="none" stroke="#fff" strokeWidth="1.400" className="ml-[8px] shrink-0">
        <path d="M1 6.500h3l5-4v13l-5-4H1zM13 6l6.500 6.500M19.500 6L13 12.500" />
      </svg>
      <svg width="22" height="16" viewBox="0 0 22 16" className="ml-[8px] shrink-0">
        <rect x="1" y="2" width="17.500" height="12" rx="3" fill="none" stroke="#fff" strokeWidth="1.500" />
        <rect x="3.500" y="4.500" width="9.500" height="7" rx="1" fill="#fff" /><path d="M20 6v4" stroke="#fff" strokeWidth="2" />
      </svg>
      <div className="ml-[18px] flex w-[77px] shrink-0 flex-col items-end text-[14.5px] leading-[20px]">
        <Fit w={34}>12:23</Fit>
        <Fit w={77}>23-08-2023</Fit>
      </div>
      <div className="ml-[10px] flex h-[20px] w-[20px] shrink-0 items-center justify-center rounded-full bg-[#4cc2ff] text-[13px] leading-none text-black">4</div>
    </div>
  );
}

export default function App() {
  return (
    <div className="flex h-[1080px] w-[1920px] flex-col overflow-hidden bg-[#f0f0f0]">
      <TitleBar />
      <MenuBar />
      <Toolbar />
      <DrawBar />
      <div className="flex h-[868px] border-t border-[#a0a0a0]">
        <LeftDocks />
        <Center />
        <BirdsEye />
      </div>
      <StatusBar />
      <Taskbar />
    </div>
  );
}
